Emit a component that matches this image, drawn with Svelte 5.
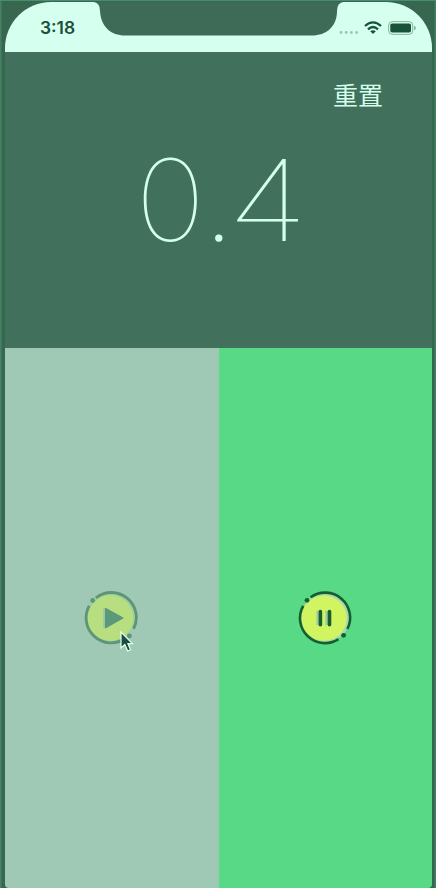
<script>
  let elapsed = $state(0.4);
  let running = $state(false);
  const digits = $derived(elapsed.toFixed(1).split(''));

  $effect(() => {
    if (!running) return;
    const timer = setInterval(() => (elapsed += 0.1), 100);
    return () => clearInterval(timer);
  });

  function reset() {
    running = false;
    elapsed = 0;
  }
</script>

<main class="device">
  <div class="screen">
    <header class="status">
      <svg class="notch" width="249" height="34" viewBox="0 0 249 34">
        <path d="M0 0Q6 1 6 9C7 25 17 33.5 31 33.5H218C232 33.5 243 25 243 9Q243 1 249 0Z" fill="#3d6b58" />
      </svg>
      <time>3:18</time>
      <div class="indicators">
        <svg width="20" height="5" viewBox="0 0 20 5" fill="#9dc4b0">
          <circle cx="2" cy="2.5" r="1.4" /><circle cx="7.2" cy="2.5" r="1.4" />
          <circle cx="12.4" cy="2.5" r="1.4" /><circle cx="17.6" cy="2.5" r="1.4" />
        </svg>
        <svg class="wifi" width="18" height="14" viewBox="0 0 18 14" fill="none" stroke="#19523b" stroke-width="2.3">
          <path d="M1 5Q9 -2.2 17 5M4 8.3Q9 3.8 14 8.3" />
          <path d="M6.2 10.3Q9 8.3 11.8 10.3L9 13Z" fill="#19523b" stroke="none" />
        </svg>
        <svg class="battery" width="28" height="14" viewBox="0 0 28 14">
          <rect x=".7" y=".7" width="24" height="12.6" rx="3.4" fill="none" stroke="#83b39c" />
          <rect x="2.3" y="2.4" width="20.7" height="9.2" rx="1.8" fill="#19523b" />
          <path d="M26 4.7Q27.8 5.3 27.8 7T26 9.3Z" fill="#83b39c" />
        </svg>
      </div>
    </header>
    <section class="readout">
      <button class="reset" onclick={reset}>重置</button>
      <div class="time">
        {#each digits as digit}<span class:point={digit === '.'} class:four={digit === '4'}>{digit}</span>{/each}
      </div>
    </section>
    <section class="controls">
      <button class="start" aria-label="开始" onclick={() => (running = true)}>
        <svg width="56" height="56" viewBox="0 0 56 56">
          <circle cx="28" cy="28" r="24" fill="#a0cfa0" />
          <circle cx="27.4" cy="28" r="22.8" fill="#b7df80" />
          <g fill="none" stroke="#5d9677" stroke-width="2.8">
            <path d="M12.9 7.8A25 25 0 0 1 50.6 38.8" />
            <path d="M6.2 15.8A25 25 0 0 0 42.2 48.5" />
          </g>
          <circle cx="9.7" cy="10.5" r="2.4" fill="#5d9677" />
          <circle cx="46.4" cy="46" r="2.4" fill="#5d9677" />
          <path d="M20.2 17.5v21l3-1V18.5Z" fill="#98c9a0" />
          <path d="M22.5 18.2L40.2 28L22.5 38Z" fill="#5c987a" stroke="#5c987a" stroke-linejoin="round" />
        </svg>
      </button>
      <button class="stop" aria-label="暂停" onclick={() => (running = false)}>
        <svg width="56" height="56" viewBox="0 0 56 56">
          <circle cx="28" cy="28" r="24.5" fill="#acd7b3" />
          <circle cx="27" cy="28.1" r="22.7" fill="#d0f560" />
          <g fill="none" stroke="#14602d" stroke-width="2.6">
            <path d="M13.6 7.3A25 25 0 0 1 50.4 39" />
            <path d="M6.2 15.8A25 25 0 0 0 41.5 49.1" />
          </g>
          <circle cx="10" cy="10.3" r="2.4" fill="#14602d" />
          <circle cx="46.6" cy="45.3" r="2.4" fill="#14602d" />
          <path d="M19.4 20.8h3.5v14.5h-3.5ZM28.3 20.8h3v14.5h-3Z" fill="#a4cba0" />
          <path d="M23.4 21.5v13.2M32.5 21.5v13.2" stroke="#14602d" stroke-width="3.6" stroke-linecap="round" />
        </svg>
      </button>
    </section>
  </div>
  <svg class="cursor" width="16" height="24" viewBox="0 0 16 24">
    <path d="M2 2V18L5.8 14.6L8.7 21L11.6 19.7L8.9 13.6H13.4Z" fill="#1c4c3c" stroke="#e4fff2" stroke-width="1.2" />
  </svg>
</main>

<style>
  :global(body) { background: #3a7059; }
  .device {
    position: relative;
    box-sizing: border-box;
    width: 436px;
    height: 888px;
    padding: 1px 4px 1px 5px;
    background: linear-gradient(90deg, #458167 0 1px, #38674f 2px 434px, #3d8061 435px);
    border-top: 1px solid #419071;
    overflow: hidden;
    font-family: Inter, "Noto Sans CJK SC", sans-serif;
  }
  .screen {
    height: 886px;
    display: flex;
    flex-direction: column;
    border-radius: 46px 46px 4px 4px;
    overflow: hidden;
  }
  .status {
    position: relative;
    flex: 0 0 50px;
    box-sizing: border-box;
    padding: 0 16px 0 35px;
    display: flex;
    justify-content: space-between;
    background: #d5ffee;
    color: #1c503c;
  }
  .notch { position: absolute; left: 89px; top: 0; }
  time { font-size: 17.4px; font-weight: 600; line-height: 22px; margin-top: 15px; }
  .indicators { display: flex; height: 14px; margin-top: 19px; }
  .indicators svg:first-child { margin-top: 9px; }
  .wifi { margin: 0 6px 0 5px; }
  .readout {
    flex: 0 0 296px;
    display: flex;
    flex-direction: column;
    background: #41705d;
    color: #d5ffec;
  }
  button { border: 0; padding: 0; margin: 0; background: none; color: inherit; font: inherit; }
  .reset {
    align-self: flex-end;
    margin: 26px 49px 0 0;
    font-size: 25px;
    line-height: 36px;
    height: 36px;
  }
  .time {
    display: flex;
    justify-content: center;
    margin-top: 18px;
    padding-left: 1px;
    font-size: 113px;
    line-height: 136px;
    font-weight: 100;
  }
  .time span { transform: scaleX(1.05); }
  .time .four { transform: scaleX(1.2); }
  .time .point { transform: none; -webkit-text-stroke: 1.4px currentColor; }
  .controls { flex: 1; display: flex; }
  .controls button { flex: 1; display: flex; justify-content: center; align-items: center; }
  .start { background: #9fc9b5; }
  .start svg { margin-right: 1px; }
  .stop { background: #57d986; }
  .cursor { position: absolute; left: 119px; top: 629px; }
</style>
